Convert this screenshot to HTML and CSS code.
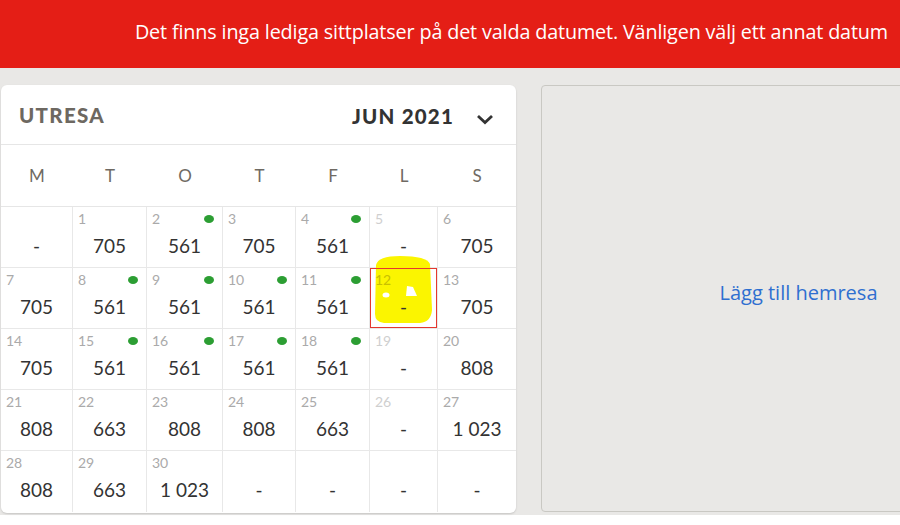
FILE: index.html
```html
<!DOCTYPE html>
<html lang="sv">
<head>
  <meta charset="UTF-8">
  <title>Välj datum</title>
  <link rel="stylesheet" href="styles.css">
</head>
<body>
  <div class="banner">Det finns inga lediga sittplatser på det valda datumet. Vänligen välj ett annat datum</div>

  <div class="main">
    <div class="calendar">
      <div class="cal-head">
        <div class="cal-title">UTRESA</div>
        <div class="cal-month">
          JUN 2021
          <svg class="chevron" width="18" height="12" viewBox="0 0 18 12"><polyline points="2,3 9,9.5 16,3" fill="none" stroke="#333" stroke-width="2.8" stroke-linejoin="miter"/></svg>
        </div>
      </div>

      <div class="weekdays">
        <div>M</div><div>T</div><div>O</div><div>T</div><div>F</div><div>L</div><div>S</div>
      </div>

      <div class="grid">
        <!-- week 1 -->
        <div class="cell"><span class="day"></span><span class="price">-</span></div>
        <div class="cell"><span class="day">1</span><span class="price">705</span></div>
        <div class="cell"><span class="day">2</span><i class="dot"></i><span class="price">561</span></div>
        <div class="cell"><span class="day">3</span><span class="price">705</span></div>
        <div class="cell"><span class="day">4</span><i class="dot"></i><span class="price">561</span></div>
        <div class="cell off"><span class="day">5</span><span class="price">-</span></div>
        <div class="cell"><span class="day">6</span><span class="price">705</span></div>
        <!-- week 2 -->
        <div class="cell"><span class="day">7</span><span class="price">705</span></div>
        <div class="cell"><span class="day">8</span><i class="dot"></i><span class="price">561</span></div>
        <div class="cell"><span class="day">9</span><i class="dot"></i><span class="price">561</span></div>
        <div class="cell"><span class="day">10</span><i class="dot"></i><span class="price">561</span></div>
        <div class="cell"><span class="day">11</span><i class="dot"></i><span class="price">561</span></div>
        <div class="cell off selected">
          <svg class="marker" width="62" height="70" viewBox="0 0 62 70">
            <path d="M4,9 Q6,0 28,0 Q55,0 58,8 L60,54 Q59,66 48,67 L12,67 Q3,66 3,58 Z" fill="#fbf500"/>
            <ellipse cx="14" cy="39" rx="3.5" ry="2.5" fill="#fff"/>
            <polygon points="35,30 41,31 45,40 34,40" fill="#fff"/>
          </svg>
          <span class="day">12</span><span class="price">-</span>
        </div>
        <div class="cell"><span class="day">13</span><span class="price">705</span></div>
        <!-- week 3 -->
        <div class="cell"><span class="day">14</span><span class="price">705</span></div>
        <div class="cell"><span class="day">15</span><i class="dot"></i><span class="price">561</span></div>
        <div class="cell"><span class="day">16</span><i class="dot"></i><span class="price">561</span></div>
        <div class="cell"><span class="day">17</span><i class="dot"></i><span class="price">561</span></div>
        <div class="cell"><span class="day">18</span><i class="dot"></i><span class="price">561</span></div>
        <div class="cell off"><span class="day">19</span><span class="price">-</span></div>
        <div class="cell"><span class="day">20</span><span class="price">808</span></div>
        <!-- week 4 -->
        <div class="cell"><span class="day">21</span><span class="price">808</span></div>
        <div class="cell"><span class="day">22</span><span class="price">663</span></div>
        <div class="cell"><span class="day">23</span><span class="price">808</span></div>
        <div class="cell"><span class="day">24</span><span class="price">808</span></div>
        <div class="cell"><span class="day">25</span><span class="price">663</span></div>
        <div class="cell off"><span class="day">26</span><span class="price">-</span></div>
        <div class="cell"><span class="day">27</span><span class="price">1 023</span></div>
        <!-- week 5 -->
        <div class="cell"><span class="day">28</span><span class="price">808</span></div>
        <div class="cell"><span class="day">29</span><span class="price">663</span></div>
        <div class="cell"><span class="day">30</span><span class="price">1 023</span></div>
        <div class="cell"><span class="day"></span><span class="price">-</span></div>
        <div class="cell"><span class="day"></span><span class="price">-</span></div>
        <div class="cell"><span class="day"></span><span class="price">-</span></div>
        <div class="cell"><span class="day"></span><span class="price">-</span></div>
      </div>
    </div>

    <div class="return-panel">
      <a class="add-return" href="#">Lägg till hemresa</a>
    </div>
  </div>
</body>
</html>
```

FILE: styles.css
```css
body {
  margin: 0;
  width: 900px;
  height: 525px;
  overflow: hidden;
  background: #fff;
  font-family: 'Open Sans', sans-serif;
}

.banner {
  height: 68px;
  background: #e41e16;
  color: #fff;
  font-size: 19.8px;
  display: flex;
  align-items: center;
  justify-content: flex-end;
  padding-right: 12px;
  padding-bottom: 6px;
  box-sizing: border-box;
  white-space: nowrap;
  letter-spacing: -0.15px;
}

.main {
  background: #e9e8e6;
  height: 447px;
  box-sizing: border-box;
  padding: 17px 0 0 1px;
  display: flex;
  gap: 25px;
}

.calendar {
  flex: 0 0 515px;
  height: 428px;
  background: #fff;
  border-radius: 6px;
  box-shadow: 0 1px 2px rgba(0, 0, 0, 0.15);
  font-family: 'Lato', sans-serif;
  overflow: hidden;
}

.cal-head {
  height: 60px;
  box-sizing: border-box;
  border-bottom: 1px solid #e6e6e6;
  display: flex;
  align-items: center;
  justify-content: space-between;
  padding: 0 22px 0 18px;
}

.cal-title {
  font-size: 20.5px;
  font-weight: 900;
  color: #6d6861;
  letter-spacing: 1.3px;
}

.cal-month {
  display: flex;
  align-items: center;
  font-size: 20.5px;
  font-weight: 900;
  color: #333;
  letter-spacing: 1.2px;
  margin-top: 2px;
}

.chevron {
  margin-left: 22px;
  margin-top: 6px;
}

.weekdays,
.grid {
  display: grid;
  grid-template-columns: 72px 74px 76px 73px 74px 68px 78px;
}

.weekdays {
  height: 62px;
  border-bottom: 1px solid #e6e6e6;
  box-sizing: border-box;
  align-items: center;
  text-align: center;
  font-size: 17px;
  font-weight: 400;
  color: #6f6a63;
}

.grid {
  grid-auto-rows: 61px;
}

.cell {
  position: relative;
  display: flex;
  flex-direction: column;
  border-right: 1px solid #e8e8e8;
  border-bottom: 1px solid #e8e8e8;
}

.cell:nth-child(7n) {
  border-right: none;
}

.cell:nth-last-child(-n+7) {
  border-bottom: none;
}

.day {
  position: relative;
  z-index: 1;
  height: 18px;
  padding: 3px 0 0 5px;
  font-size: 14px;
  color: #aaa;
}

.off .day {
  color: #cfcfcf;
}

.price {
  position: relative;
  z-index: 1;
  text-align: center;
  font-size: 19px;
  color: #333;
  margin-top: 6px;
}

.dot {
  position: absolute;
  top: 8px;
  right: 8px;
  width: 10px;
  height: 8px;
  border-radius: 50%;
  background: #2c9e33;
}

.selected::after {
  content: '';
  position: absolute;
  inset: 0;
  border: 1px solid #e5382f;
  z-index: 2;
}

.selected .day {
  color: #c9c000;
}

.marker {
  position: absolute;
  left: 2px;
  top: -12px;
  z-index: 0;
}

.return-panel {
  flex: 0 0 515px;
  height: 427px;
  box-sizing: border-box;
  background: #e9e8e6;
  border: 1px solid #c9c8c3;
  border-radius: 4px;
  display: flex;
  align-items: center;
  justify-content: center;
}

.add-return {
  color: #2f6fd0;
  text-decoration: none;
  font-size: 20px;
  margin-top: -12px;
}
```
